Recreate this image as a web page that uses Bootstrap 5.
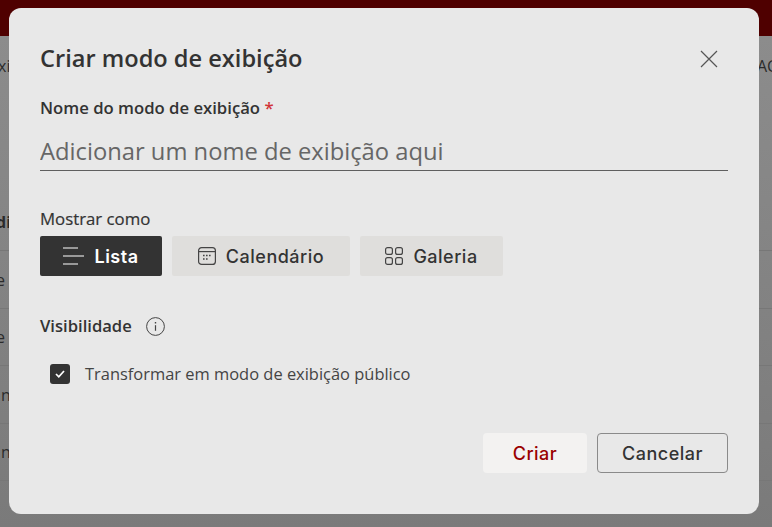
<!DOCTYPE html>
<html lang="pt-BR">
<head>
    <meta charset="UTF-8">
    <meta name="viewport" content="width=device-width, initial-scale=1.0">
    <title>Criar modo de exibição</title>
    <link href="https://cdn.jsdelivr.net/npm/bootstrap@5.3.5/dist/css/bootstrap.min.css" rel="stylesheet">
    <style>
        html, body { height: 527px; overflow: hidden; }
        body { position: relative; background: #808080; font-family: "Open Sans", "Noto Sans", sans-serif; color: #333; }
        .top-strip { height: 36px; background: #4f0000; }
        .page-back { height: 491px; background: linear-gradient(180deg, #8c8c8c 0, #7a7a7a 100%); color: #2b2b2b; font-size: 14px; position: relative; }
        .back-line { height: 57.5px; border-bottom: 1px solid #777; }
        .back-first { height: 215px; }
        .page-frag { position: absolute; line-height: 16px; font-size: 16px; }
        .dlg { position: absolute; left: 9px; top: 8px; width: 750px; height: 506px; background: #e8e8e8; border: 0; border-radius: 12px; padding: 0 31px; }
        .dlg-title { font-size: 23.6px; font-weight: 600; line-height: 32px; color: #333; margin: 34px 0 0; }
        .dlg-x { position: absolute; right: 41px; top: 42px; width: 18px; height: 18px; background: none; border: 0; padding: 0; display: flex; }
        .field-label { font-size: 16.7px; font-weight: 600; line-height: 20px; color: #333; margin: 24px 0 0; }
        .req { color: #d13438; }
        .name-input { height: 43px; font-size: 23.75px; color: #333; background: transparent; border: 0; border-bottom: 1px solid #5f5f5f; border-radius: 0; padding: 3px 0 0; margin-top: 10px; }
        .name-input::placeholder { color: #666; opacity: 1; }
        .show-label { font-size: 16.8px; font-weight: 400; line-height: 20px; margin: 38px 0 7px; -webkit-text-stroke: .2px #333; }
        .view-group { gap: 10px; }
        .view-btn { height: 40px; border: 0; border-radius: 2px; background: #dfdedc; color: #333; font-family: Inter, sans-serif; font-size: 18px; letter-spacing: .5px; font-weight: 500; display: flex; align-items: center; justify-content: center; gap: 10px; padding: 0; }
        .view-btn.is-on { background: #333; color: #fff; font-weight: 600; }
        .view-list { width: 122px; }
        .view-cal { width: 178px; }
        .view-gal { width: 143px; }
        .vis-row { margin-top: 40px; line-height: 20px; height: 20px; gap: 14px; }
        .vis-label { font-size: 16.6px; font-weight: 600; }
        .pub-row { margin: 28px 0 0 10px; height: 20px; gap: 15px; }
        .pub-box { width: 20px; height: 20px; background: #333; border-radius: 3px; display: flex; align-items: center; justify-content: center; }
        .pub-text { font-size: 16.45px; line-height: 20px; color: #444; }
        .dlg-foot { position: absolute; right: 31px; bottom: 41px; gap: 10px; }
        .foot-btn { width: 131px; height: 40px; border-radius: 4px; font-family: Inter, sans-serif; font-size: 18px; letter-spacing: .5px; font-weight: 500; padding: 0; }
        .foot-create { width: 104px; background: #f3f2f1; color: #990000; border: 0; }
        .foot-cancel { background: transparent; color: #333; border: 1px solid #8a8a8a; }
    </style>
</head>
<body>
    <div class="top-strip"></div>
    <div class="page-back">
        <div class="back-line back-first"></div>
        <div class="back-line"></div>
        <div class="back-line"></div>
        <div class="back-line"></div>
        <div class="back-line"></div>
        <span class="page-frag" style="left:-2px;top:22px">xi</span>
        <span class="page-frag" style="left:757px;top:22px">AC</span>
        <span class="page-frag fw-bold" style="left:-4px;top:178px">di</span>
        <span class="page-frag" style="left:-4px;top:236px">e</span>
        <span class="page-frag" style="left:-4px;top:293px">e</span>
        <span class="page-frag" style="left:1px;top:351px">n</span>
        <span class="page-frag" style="left:1px;top:408px">n</span>
    </div>

    <div class="dlg modal-content d-block">
        <h1 class="dlg-title">Criar modo de exibição</h1>
        <button class="dlg-x" aria-label="Fechar">
            <svg width="18" height="18" viewBox="0 0 18 18" fill="none" stroke="#555" stroke-width="1.2"><path d="M1 1l16 16M17 1L1 17"/></svg>
        </button>

        <label class="field-label form-label d-block" for="viewName">Nome do modo de exibição <span class="req">*</span></label>
        <input id="viewName" class="name-input form-control shadow-none" type="text" placeholder="Adicionar um nome de exibição aqui">

        <div class="show-label">Mostrar como</div>
        <div class="d-flex view-group">
            <button class="btn view-btn view-list is-on">
                <svg width="21" height="18" viewBox="0 0 21 18" fill="none" stroke="#fff" stroke-width="1.2"><path d="M0 1h15M0 9h21M0 17h15"/></svg>
                Lista
            </button>
            <button class="btn view-btn view-cal">
                <svg width="18" height="18" viewBox="0 0 18 18" fill="none" stroke="#444" stroke-width="1.2"><rect x=".6" y=".6" width="16.8" height="16.8" rx="3"/><path d="M1 4.6h16"/><path stroke-width="1.6" stroke-dasharray="1.6 1.4" d="M5 8.5h8M5 12h5"/></svg>
                Calendário
            </button>
            <button class="btn view-btn view-gal">
                <svg width="18" height="18" viewBox="0 0 18 18" fill="none" stroke="#444" stroke-width="1.2"><rect x=".6" y=".6" width="6.8" height="6.8" rx="2"/><rect x="10.6" y=".6" width="6.8" height="6.8" rx="2"/><rect x=".6" y="10.6" width="6.8" height="6.8" rx="2"/><rect x="10.6" y="10.6" width="6.8" height="6.8" rx="2"/></svg>
                Galeria
            </button>
        </div>

        <div class="vis-row d-flex align-items-center">
            <span class="vis-label">Visibilidade</span>
            <svg width="19" height="19" viewBox="0 0 19 19" fill="none" stroke="#444" stroke-width="1"><circle cx="9.5" cy="9.5" r="8.9"/><path d="M9.5 8.2v5.6" stroke-width="1.2"/><path d="M9.5 5v1.5" stroke-width="1.4"/></svg>
        </div>

        <div class="pub-row d-flex align-items-center">
            <span class="pub-box">
                <svg width="10" height="8" viewBox="0 0 10 8" fill="none" stroke="#fff" stroke-width="1.7"><path d="M1 4l2.8 2.8L9 1"/></svg>
            </span>
            <span class="pub-text">Transformar em modo de exibição público</span>
        </div>

        <div class="dlg-foot d-flex">
            <button class="btn foot-btn foot-create">Criar</button>
            <button class="btn foot-btn foot-cancel">Cancelar</button>
        </div>
    </div>

    <script src="https://cdn.jsdelivr.net/npm/bootstrap@5.3.5/dist/js/bootstrap.bundle.min.js"></script>
</body>
</html>
